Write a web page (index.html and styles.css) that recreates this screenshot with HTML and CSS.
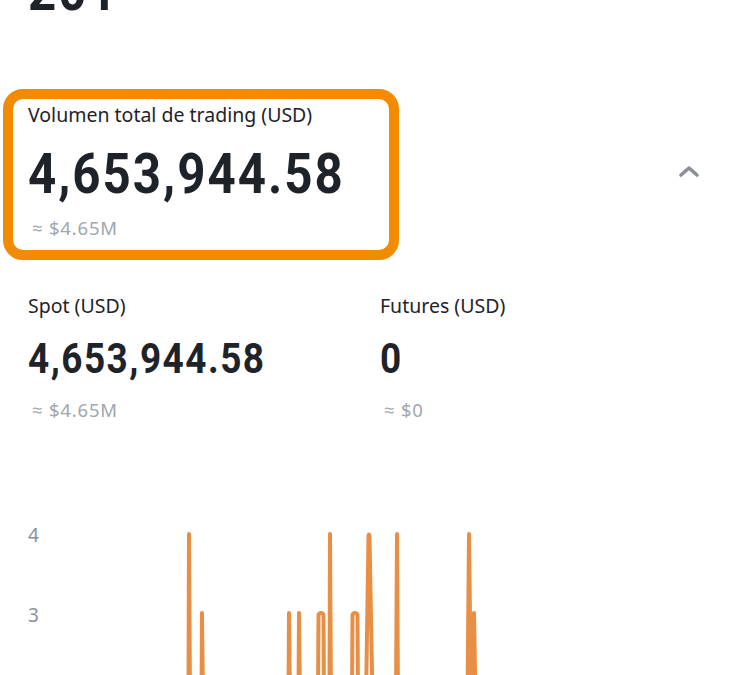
FILE: index.html
```html
<!DOCTYPE html>
<html lang="es">
<head>
<meta charset="utf-8">
<link rel="stylesheet" href="styles.css">
</head>
<body>
<div class="page">
  <div class="top-num"><span class="narrow">201</span></div>

  <div class="total-row">
    <div class="total-box">
      <div class="label">Volumen total de trading (USD)</div>
      <div class="big-num"><span class="narrow">4,653,944.58</span></div>
      <div class="approx">≈ $4.65M</div>
    </div>
    <svg class="chevron" width="22" height="14" viewBox="0 0 22 14">
      <path d="M3 11 L11 4 L19 11" fill="none" stroke="#8c9096" stroke-width="3.6" stroke-linecap="round" stroke-linejoin="round"/>
    </svg>
  </div>

  <div class="split">
    <div class="col">
      <div class="label">Spot (USD)</div>
      <div class="mid-num"><span class="narrow">4,653,944.58</span></div>
      <div class="approx">≈ $4.65M</div>
    </div>
    <div class="col">
      <div class="label">Futures (USD)</div>
      <div class="mid-num"><span class="narrow">0</span></div>
      <div class="approx">≈ $0</div>
    </div>
  </div>

  <div class="chart">
    <svg width="738" height="200" viewBox="0 480 738 200">
      <text class="axis" x="28" y="541.5">4</text>
      <text class="axis" x="28" y="621.5">3</text>
      <g fill="none" stroke="#e98f45" stroke-width="4" stroke-linecap="round" stroke-linejoin="round">
        <path d="M188.5 700 L189 534 L190 700"/>
        <path d="M201.5 700 L202 613 L203 700"/>
        <path d="M288.5 700 L289 613 L290 700"/>
        <path d="M298.5 700 L299 613 L300 700"/>
        <path d="M318 700 L318.5 615 Q319 613 321 613 Q323 613 323.5 615 L324 700"/>
        <path d="M329.5 700 L330 534 L331 700"/>
        <path d="M352 700 L352.5 615 Q353 613 355 613 Q357 613 357.5 615 L358 700"/>
        <path d="M366 700 L368.5 536 Q369 533 369.5 536 L372.5 700"/>
        <path d="M396 700 L397 534 L398 700"/>
        <path d="M467.5 700 L469 534 L471 700"/>
        <path d="M472.5 700 L474 613 L475.5 700"/>
      </g>
    </svg>
  </div>
</div>
</body>
</html>
```

FILE: styles.css
```css
html, body {
  margin: 0;
  padding: 0;
  background: #ffffff;
}

body {
  width: 738px;
  height: 675px;
  overflow: hidden;
  font-family: "Noto Sans", "Open Sans", sans-serif;
  color: #1e2329;
}

.page {
  display: flex;
  flex-direction: column;
}

.narrow {
  display: inline-block;
  transform: scaleX(0.88);
  transform-origin: left center;
  white-space: nowrap;
  letter-spacing: 0.04em;
}

.top-num {
  font-family: Roboto, "Liberation Sans", sans-serif;
  font-weight: 700;
  font-size: 56px;
  line-height: 56px;
  height: 56px;
  margin-top: -37px;
  padding-left: 28px;
  color: #1e2329;
}

.total-row {
  display: flex;
  align-items: flex-start;
  justify-content: space-between;
  margin-top: 70px;
  padding-left: 3px;
  padding-right: 38px;
}

.total-box {
  box-sizing: border-box;
  width: 396px;
  height: 171px;
  border: 10px solid #f28b00;
  border-radius: 20px;
  padding: 3px 0 0 15px;
}

.label {
  font-size: 19.5px;
  line-height: 26px;
  color: #1e2329;
}

.big-num {
  font-family: Roboto, "Liberation Sans", sans-serif;
  font-weight: 700;
  font-size: 56px;
  line-height: 72px;
  height: 72px;
  margin-top: 10px;
  color: #1e2329;
}

.approx {
  font-size: 18.5px;
  line-height: 24px;
  color: #a0a6ad;
  padding-left: 4px;
  letter-spacing: 0.8px;
  margin-top: 6px;
}

.chevron {
  display: block;
  margin-top: 75px;
}

.split {
  display: grid;
  grid-template-columns: 352px 1fr;
  padding-left: 28px;
  margin-top: 33px;
}

.mid-num {
  font-family: Roboto, "Liberation Sans", sans-serif;
  font-weight: 700;
  font-size: 42px;
  line-height: 56px;
  height: 56px;
  margin-top: 12px;
  color: #1e2329;
}

.col .approx {
  margin-top: 11px;
}

.chart {
  margin-top: 58px;
}

.chart svg {
  display: block;
}

.axis {
  font-family: "Noto Sans", sans-serif;
  font-size: 19px;
  fill: #8a9099;
}
```
